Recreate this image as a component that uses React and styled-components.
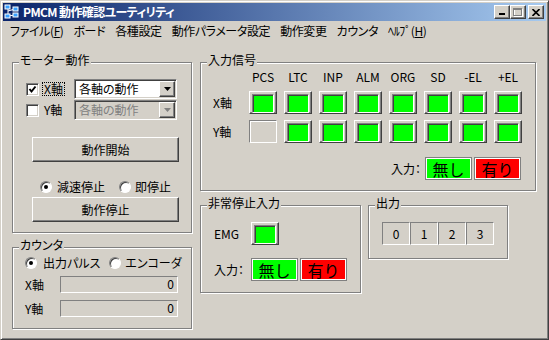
import React from "react";
import styled, { createGlobalStyle, css } from "styled-components";

const GlobalStyle = createGlobalStyle`
  html, body {
    margin: 0;
    padding: 0;
    background: #d4d0c8;
  }
  body {
    font-family: "Noto Sans CJK JP", "Liberation Sans", sans-serif;
    font-size: 12px;
    color: #000;
    font-feature-settings: "palt";
  }
  * {
    box-sizing: border-box;
  }
`;

const raised = css`
  border: 1px solid;
  border-color: #fff #404040 #404040 #fff;
  box-shadow: inset -1px -1px 0 #808080;
  background: #d4d0c8;
`;

const sunken = css`
  border: 1px solid;
  border-color: #808080 #fff #fff #808080;
  box-shadow: inset 1px 1px 0 #404040, inset -1px -1px 0 #d4d0c8;
`;

const Window = styled.div`
  width: 549px;
  height: 340px;
  background: #d4d0c8;
  border: 1px solid;
  border-color: #d4d0c8 #404040 #404040 #d4d0c8;
  box-shadow: inset 1px 1px 0 #fff, inset -1px -1px 0 #808080;
  padding: 2px;
  display: flex;
  flex-direction: column;
`;

const TitleBar = styled.div`
  height: 18px;
  display: flex;
  align-items: center;
  padding: 0 2px 0 1px;
  background: linear-gradient(to right, #0a246a, #a6caf0);
`;

const TitleText = styled.span`
  margin-left: 3px;
  color: #fff;
  font-weight: bold;
  font-size: 12px;
  line-height: 16px;
  letter-spacing: -0.6px;
`;

const CaptionGroup = styled.div`
  margin-left: auto;
  display: flex;
  gap: ${(p) => p.$gap || 0}px;
`;

const CaptionButton = styled.div`
  width: 16px;
  height: 14px;
  ${raised};
  display: flex;
  align-items: center;
  justify-content: center;
`;

const MenuBar = styled.div`
  height: 19px;
  display: flex;
  align-items: center;
  padding-left: 2px;
`;

const MenuItem = styled.span`
  padding: 0 5px;
  line-height: 17px;
  white-space: nowrap;
  letter-spacing: -0.4px;
`;

const Body = styled.div`
  display: flex;
  gap: 8px;
  padding: 22px 0 0 9px;
`;

const Column = styled.div`
  width: ${(p) => p.$w}px;
  display: flex;
  flex-direction: column;
`;

const Group = styled.div`
  position: relative;
  width: ${(p) => p.$w}px;
  height: ${(p) => p.$h}px;
  margin-top: ${(p) => p.$mt || 0}px;
  border: 1px solid #808080;
  box-shadow: 1px 1px 0 #fff, inset 1px 1px 0 #fff;
  flex: none;
`;

const GroupTitle = styled.span`
  position: absolute;
  top: -10px;
  left: 6px;
  padding: 0 1px;
  background: #d4d0c8;
  line-height: 14px;
  white-space: nowrap;
`;

const MotorBody = styled.div`
  display: flex;
  flex-direction: column;
  padding: 16px 14px 0 13px;
`;

const AxisRow = styled.div`
  display: flex;
  align-items: center;
  height: 20px;
  margin-bottom: 1px;
`;

const CheckBox = styled.span`
  width: 13px;
  height: 13px;
  flex: none;
  background: #fff;
  ${sunken};
  display: flex;
  align-items: center;
  justify-content: center;
`;

const AxisLabel = styled.span`
  margin-left: 3px;
  padding: 0 1px;
  line-height: 12px;
  border: 1px ${(p) => (p.$focus ? "dotted #000" : "solid transparent")};
`;

const Combo = styled.div`
  margin-left: auto;
  width: 103px;
  height: 20px;
  ${sunken};
  background: ${(p) => (p.$disabled ? "#d4d0c8" : "#fff")};
  padding: 1px;
  display: flex;
  align-items: center;
`;

const ComboText = styled.span`
  flex: 1;
  padding-left: 3px;
  line-height: 16px;
  color: ${(p) => (p.$disabled ? "#808080" : "#000")};
`;

const ComboButton = styled.span`
  width: 16px;
  height: 16px;
  ${raised};
  display: flex;
  align-items: center;
  justify-content: center;
`;

const PushButton = styled.div`
  width: 147px;
  height: 25px;
  margin-left: 6px;
  margin-top: ${(p) => p.$mt || 0}px;
  ${raised};
  display: flex;
  align-items: center;
  justify-content: center;
  line-height: 14px;
`;

const RadioRow = styled.div`
  display: flex;
  align-items: center;
  height: 12px;
  margin: ${(p) => p.$m};
`;

const Radio = styled.span`
  width: 12px;
  height: 12px;
  flex: none;
  border-radius: 50%;
  background: #fff;
  border: 1px solid;
  border-color: #808080 #fff #fff #808080;
  box-shadow: inset 1px 1px 0 #404040;
  display: flex;
  align-items: center;
  justify-content: center;
  &::after {
    content: "";
    width: 4px;
    height: 4px;
    border-radius: 50%;
    background: ${(p) => (p.$checked ? "#000" : "transparent")};
  }
`;

const RadioLabel = styled.span`
  margin-left: ${(p) => p.$ml || 5}px;
  margin-right: ${(p) => p.$mr || 0}px;
  line-height: 14px;
  white-space: nowrap;
`;

const CounterBody = styled.div`
  display: flex;
  flex-direction: column;
  padding: 9px 0 0 12px;
`;

const CounterRow = styled.div`
  display: flex;
  align-items: center;
  margin-top: ${(p) => p.$mt}px;
`;

const CounterLabel = styled.span`
  width: 35px;
  line-height: 14px;
`;

const Field = styled.div`
  width: 118px;
  height: 17px;
  border: 1px solid;
  border-color: #808080 #fff #fff #808080;
  text-align: right;
  padding-right: 3px;
  line-height: 14px;
`;

const SignalGrid = styled.div`
  display: grid;
  grid-template-columns: 29px repeat(8, 28px);
  grid-template-rows: 16px 23px 23px;
  column-gap: 7px;
  row-gap: 6px;
  padding: 6px 0 0 12px;
`;

const HeadLabel = styled.span`
  text-align: center;
  line-height: 16px;
  white-space: nowrap;
`;

const RowLabel = styled.span`
  align-self: center;
  line-height: 14px;
`;

const Led = styled.div`
  width: 28px;
  height: 23px;
  ${(p) =>
    p.$off
      ? css`
          border: 1px solid;
          border-color: #808080 #fff #fff #808080;
          box-shadow: inset 1px 1px 0 #fff;
        `
      : css`
          ${raised};
          padding: 2px;
          &::after {
            content: "";
            display: block;
            height: 100%;
            background: #00ff00;
            border: 1px solid;
            border-color: #808080 #fff #fff #808080;
            box-shadow: inset 1px 1px 0 #404040;
          }
        `}
`;

const InputRow = styled.div`
  display: flex;
  align-items: center;
  justify-content: ${(p) => (p.$end ? "flex-end" : "flex-start")};
  gap: 2px;
  margin-top: ${(p) => p.$mt}px;
  padding-right: ${(p) => (p.$end ? 14 : 0)}px;
`;

const InputLabel = styled.span`
  width: ${(p) => (p.$w ? `${p.$w}px` : "auto")};
  margin-right: ${(p) => (p.$w ? 0 : 2)}px;
  line-height: 14px;
  white-space: nowrap;
`;

const StateBox = styled.div`
  width: 47px;
  height: 23px;
  background: ${(p) => p.$color};
  border: 1px solid #808080;
  box-shadow: inset 0 0 0 1px #fff;
  display: flex;
  align-items: center;
  justify-content: center;
  font-size: 16px;
  line-height: 18px;
  font-feature-settings: normal;
`;

const EmgBody = styled.div`
  padding: 16px 0 0 13px;
`;

const LowerRow = styled.div`
  display: flex;
  align-items: flex-start;
  gap: 7px;
  margin-top: 14px;
`;

const OutputCells = styled.div`
  display: flex;
  padding: 16px 0 0 13px;
`;

const OutputCell = styled.div`
  width: 28px;
  height: 23px;
  border: 1px solid;
  border-color: #808080 #fff #fff #808080;
  display: flex;
  align-items: center;
  justify-content: center;
  line-height: 14px;
`;

const AppIcon = () => (
  <svg width="16" height="16" viewBox="0 0 16 16">
    <rect x="0" y="0" width="16" height="16" fill="#0a246a" />
    <path d="M4 3 L4 12 M4 7 L11 5 M4 12 L11 11" stroke="#fff" strokeWidth="1" fill="none" />
    <rect x="1" y="1" width="5" height="4" fill="#3aa0ff" stroke="#fff" strokeWidth="1" />
    <rect x="9" y="3" width="5" height="4" fill="#3aa0ff" stroke="#fff" strokeWidth="1" />
    <rect x="1" y="10" width="5" height="4" fill="#3aa0ff" stroke="#fff" strokeWidth="1" />
    <rect x="9" y="9" width="5" height="4" fill="#3aa0ff" stroke="#fff" strokeWidth="1" />
  </svg>
);

const DownArrow = ({ color = "#000" }) => (
  <svg width="7" height="4" viewBox="0 0 7 4">
    <polygon points="0,0 7,0 3.5,4" fill={color} />
  </svg>
);

const CheckMark = () => (
  <svg width="9" height="9" viewBox="0 0 9 9">
    <polyline points="1.5,4 3.5,6.5 7.5,1.5" fill="none" stroke="#000" strokeWidth="2" />
  </svg>
);

const signals = ["PCS", "LTC", "INP", "ALM", "ORG", "SD", "-EL", "+EL"];

const App = () => {
  return (
    <Window>
      <GlobalStyle />
      <TitleBar>
        <AppIcon />
        <TitleText>PMCM 動作確認ユーティリティ</TitleText>
        <CaptionGroup $gap={2}>
          <CaptionGroup>
            <CaptionButton>
              <svg width="8" height="8" viewBox="0 0 8 8">
                <rect x="1" y="5" width="6" height="2" fill="#000" />
              </svg>
            </CaptionButton>
            <CaptionButton>
              <svg width="10" height="9" viewBox="0 0 10 9">
                <rect x="1.5" y="1.5" width="8" height="7" fill="none" stroke="#fff" />
                <rect x="0.5" y="0.5" width="8" height="7" fill="none" stroke="#808080" />
                <rect x="0" y="0" width="9" height="2" fill="#808080" />
              </svg>
            </CaptionButton>
          </CaptionGroup>
          <CaptionButton>
            <svg width="8" height="7" viewBox="0 0 8 7">
              <path d="M0.5 0 L7.5 7 M7.5 0 L0.5 7" stroke="#000" strokeWidth="1.6" />
            </svg>
          </CaptionButton>
        </CaptionGroup>
      </TitleBar>

      <MenuBar>
        <MenuItem>
          ファイル(<u>F</u>)
        </MenuItem>
        <MenuItem>ボード</MenuItem>
        <MenuItem>各種設定</MenuItem>
        <MenuItem>動作パラメータ設定</MenuItem>
        <MenuItem>動作変更</MenuItem>
        <MenuItem>カウンタ</MenuItem>
        <MenuItem>
          ﾍﾙﾌﾟ(<u>H</u>)
        </MenuItem>
      </MenuBar>

      <Body>
        <Column $w={180}>
          <Group $w={180} $h={171}>
            <GroupTitle>モーター動作</GroupTitle>
            <MotorBody>
              <AxisRow>
                <CheckBox>
                  <CheckMark />
                </CheckBox>
                <AxisLabel $focus>X軸</AxisLabel>
                <Combo>
                  <ComboText>各軸の動作</ComboText>
                  <ComboButton>
                    <DownArrow />
                  </ComboButton>
                </Combo>
              </AxisRow>
              <AxisRow>
                <CheckBox />
                <AxisLabel>Y軸</AxisLabel>
                <Combo $disabled>
                  <ComboText $disabled>各軸の動作</ComboText>
                  <ComboButton>
                    <DownArrow color="#808080" />
                  </ComboButton>
                </Combo>
              </AxisRow>
              <PushButton $mt={16}>動作開始</PushButton>
              <RadioRow $m="19px 0 0 14px">
                <Radio $checked />
                <RadioLabel $mr={14}>減速停止</RadioLabel>
                <Radio />
                <RadioLabel $ml={4}>即停止</RadioLabel>
              </RadioRow>
              <PushButton $mt={4}>動作停止</PushButton>
            </MotorBody>
          </Group>

          <Group $w={180} $h={82} $mt={14}>
            <GroupTitle>カウンタ</GroupTitle>
            <CounterBody>
              <RadioRow $m="0">
                <Radio $checked />
                <RadioLabel $ml={6} $mr={9}>
                  出力パルス
                </RadioLabel>
                <Radio />
                <RadioLabel $ml={4}>エンコーダ</RadioLabel>
              </RadioRow>
              <CounterRow $mt={7}>
                <CounterLabel>X軸</CounterLabel>
                <Field>0</Field>
              </CounterRow>
              <CounterRow $mt={7}>
                <CounterLabel>Y軸</CounterLabel>
                <Field>0</Field>
              </CounterRow>
            </CounterBody>
          </Group>
        </Column>

        <Column $w={336}>
          <Group $w={336} $h={129}>
            <GroupTitle>入力信号</GroupTitle>
            <SignalGrid>
              <span />
              {signals.map((s) => (
                <HeadLabel key={s}>{s}</HeadLabel>
              ))}
              <RowLabel>X軸</RowLabel>
              {signals.map((s) => (
                <Led key={`x-${s}`} />
              ))}
              <RowLabel>Y軸</RowLabel>
              {signals.map((s) => (
                <Led key={`y-${s}`} $off={s === "PCS"} />
              ))}
            </SignalGrid>
            <InputRow $end $mt={14}>
              <InputLabel>入力：</InputLabel>
              <StateBox $color="#00ff00">無し</StateBox>
              <StateBox $color="#ff0000">有り</StateBox>
            </InputRow>
          </Group>

          <LowerRow>
            <Group $w={161} $h={88}>
              <GroupTitle>非常停止入力</GroupTitle>
              <EmgBody>
                <InputRow $mt={0}>
                  <InputLabel $w={35}>EMG</InputLabel>
                  <Led />
                </InputRow>
                <InputRow $mt={13}>
                  <InputLabel $w={35}>入力：</InputLabel>
                  <StateBox $color="#00ff00">無し</StateBox>
                  <StateBox $color="#ff0000">有り</StateBox>
                </InputRow>
              </EmgBody>
            </Group>

            <Group $w={140} $h={54}>
              <GroupTitle>出力</GroupTitle>
              <OutputCells>
                {[0, 1, 2, 3].map((n) => (
                  <OutputCell key={n}>{n}</OutputCell>
                ))}
              </OutputCells>
            </Group>
          </LowerRow>
        </Column>
      </Body>
    </Window>
  );
};

export default App;
